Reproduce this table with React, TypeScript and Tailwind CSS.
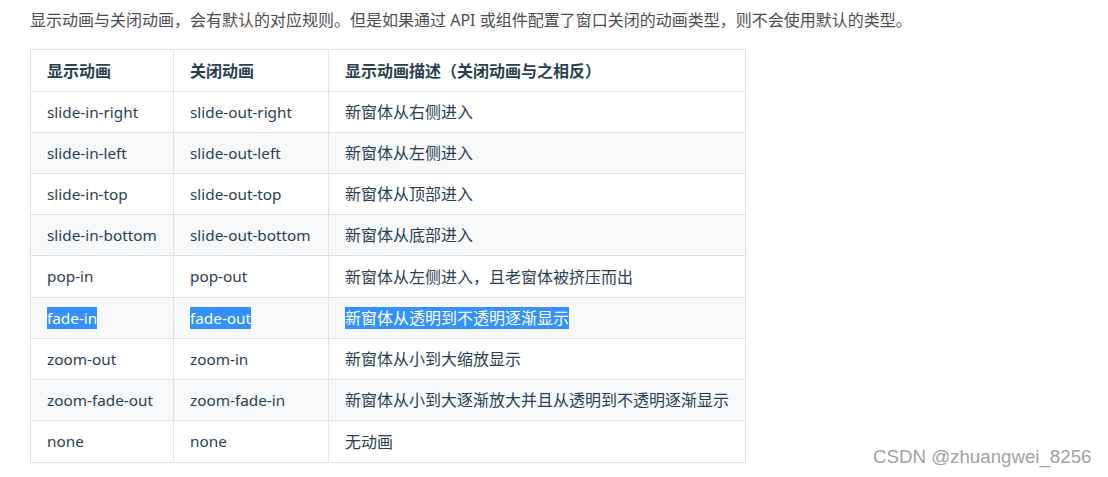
const rows: [string, string, string][] = [
  ['slide-in-right', 'slide-out-right', '新窗体从右侧进入'],
  ['slide-in-left', 'slide-out-left', '新窗体从左侧进入'],
  ['slide-in-top', 'slide-out-top', '新窗体从顶部进入'],
  ['slide-in-bottom', 'slide-out-bottom', '新窗体从底部进入'],
  ['pop-in', 'pop-out', '新窗体从左侧进入，且老窗体被挤压而出'],
  ['fade-in', 'fade-out', '新窗体从透明到不透明逐渐显示'],
  ['zoom-out', 'zoom-in', '新窗体从小到大缩放显示'],
  ['zoom-fade-out', 'zoom-fade-in', '新窗体从小到大逐渐放大并且从透明到不透明逐渐显示'],
  ['none', 'none', '无动画'],
];

const cols = 'grid grid-cols-[143px_155px_416px]';

function Cell({ text, last, selected, cjk }: { text: string; last?: boolean; selected?: boolean; cjk?: boolean }) {
  return (
    <div className={`flex items-center pl-4 ${cjk ? 'text-[16px]' : 'text-[15.3px]'} ${last ? '' : 'border-r border-[#dfe2e5]'}`}>
      <span className={selected ? 'bg-[#3390ff] text-white leading-[22px]' : ''}>{text}</span>
    </div>
  );
}

export default function App() {
  return (
    <div className="relative w-[1108px] h-[477px] bg-white text-[#2c3e50] font-['Noto_Sans','Noto_Sans_CJK_SC',sans-serif]">
      <p className="pl-[30px] pt-[9px] leading-[22px] text-[16px] text-[#4d4d4d]">
        显示动画与关闭动画，会有默认的对应规则。但是如果通过 API 或组件配置了窗口关闭的动画类型，则不会使用默认的类型。
      </p>
      <div className="ml-[30px] mt-[18px] w-[716px] border border-[#dfe2e5]">
        <div className={`${cols} h-[42px] border-b border-[#dfe2e5] font-bold`}>
          <Cell text="显示动画" cjk />
          <Cell text="关闭动画" cjk />
          <Cell text="显示动画描述（关闭动画与之相反）" cjk last />
        </div>
        {rows.map((r, i) => (
          <div
            key={r[0]}
            className={`${cols} ${i === 4 ? 'h-[42px]' : 'h-[41px]'} ${i < rows.length - 1 ? 'border-b border-[#dfe2e5]' : ''} ${i % 2 === 1 ? 'bg-[#f6f8fa]' : ''}`}
          >
            <Cell text={r[0]} selected={i === 5} />
            <Cell text={r[1]} selected={i === 5} />
            <Cell text={r[2]} selected={i === 5} cjk last />
          </div>
        ))}
      </div>
      <div className="absolute left-[873px] top-[443px] text-[18.7px] text-[#a0a0a0] font-['Liberation_Sans',sans-serif] [text-shadow:0_0_1px_#fff]">
        CSDN @zhuangwei_8256
      </div>
    </div>
  );
}
